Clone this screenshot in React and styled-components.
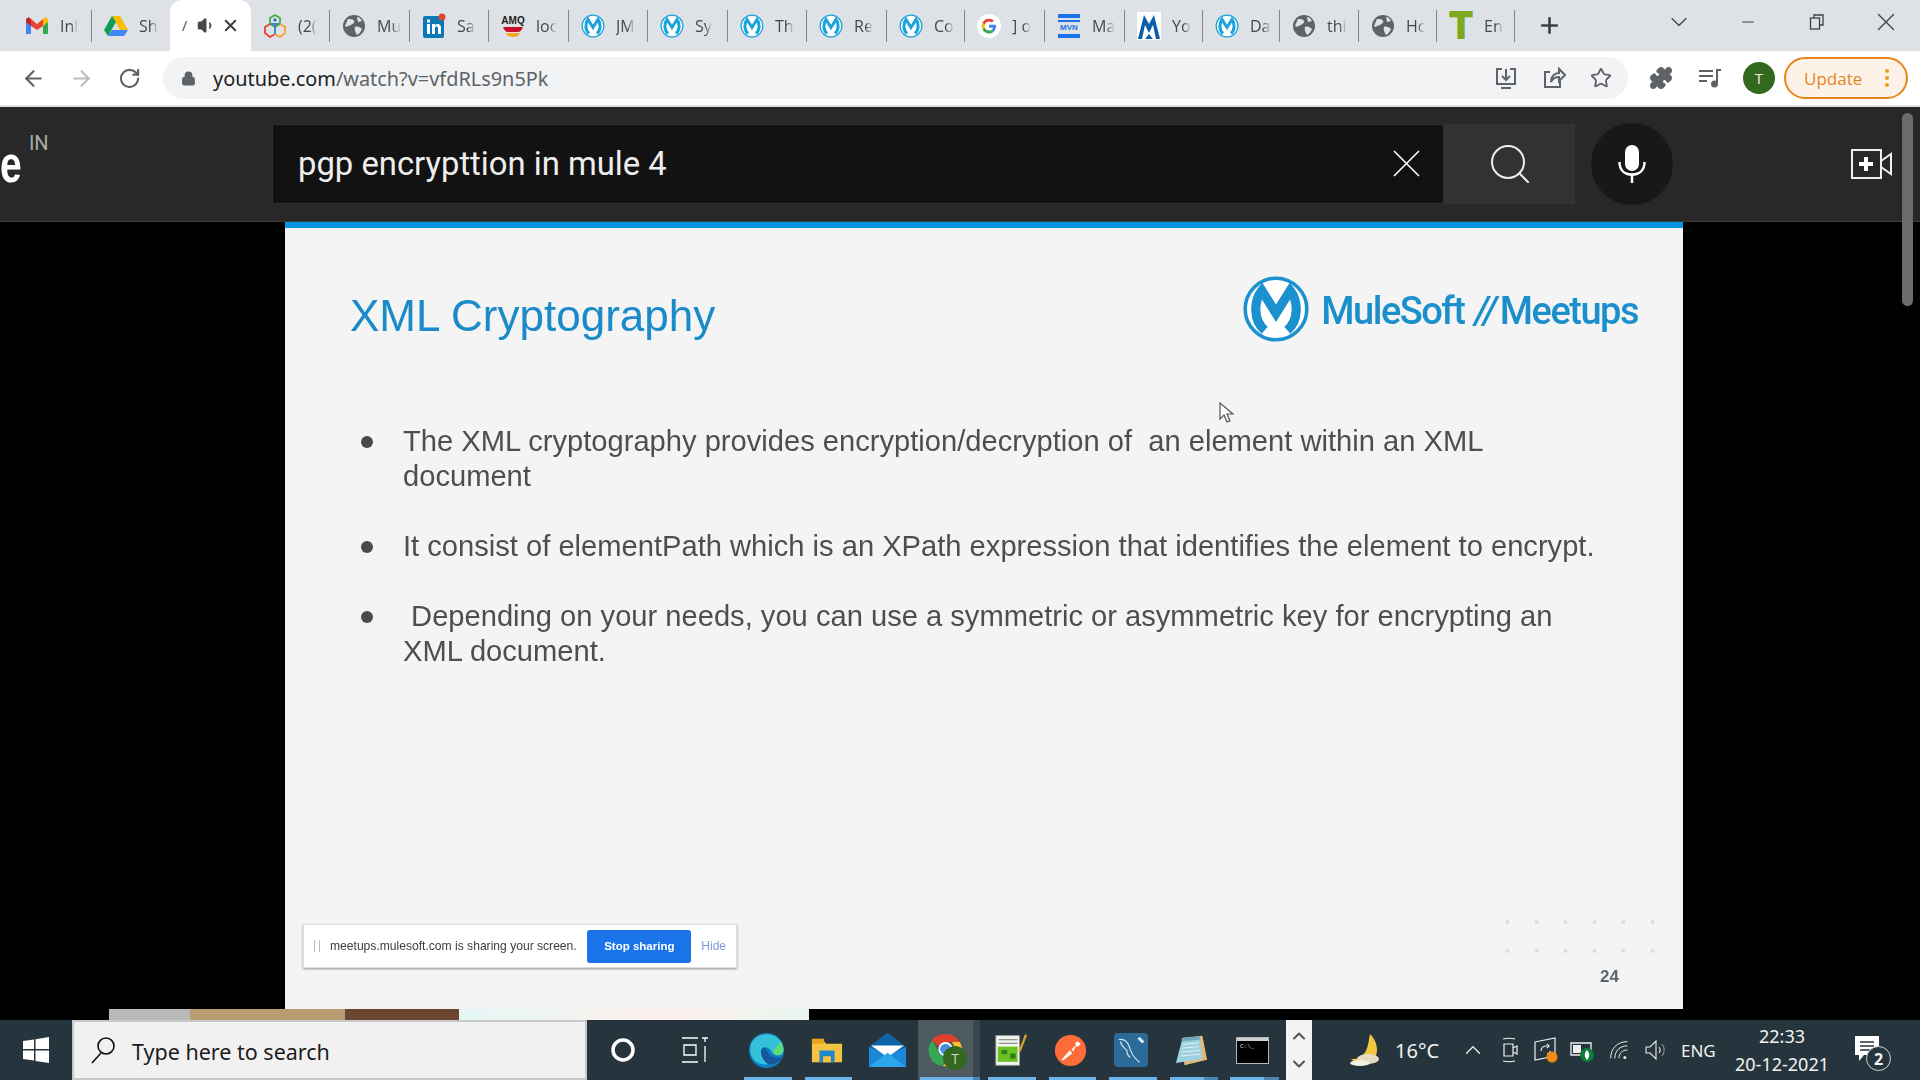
import styled, { createGlobalStyle } from "styled-components";
import { ArrowLeft, ArrowRight, RotateCw, Lock, Star, Puzzle, ChevronDown, Minus, X, Plus, Search, ChevronUp, Volume1 } from "lucide-react";

const GlobalStyle = createGlobalStyle`
  html, body {
    margin: 0;
    padding: 0;
    height: 100%;
    background: #000;
    overflow: hidden;
    font-family: "Open Sans", "Liberation Sans", sans-serif;
  }
  * {
    box-sizing: border-box;
  }
`;

const MuleMark = ({ size = 26, color = "#1aa3dc", ring = 3, weight = 6.5 }) => (
  <svg width={size} height={size} viewBox="0 0 48 48">
    <circle cx="24" cy="24" r={23 - ring / 2} fill="#fff" stroke={color} strokeWidth={ring} />
    <path
      d="M16 39 C8 32 8 19 14 11 L24 27 L34 11 C40 19 40 32 32 39"
      fill="none"
      stroke={color}
      strokeWidth={weight}
    />
  </svg>
);

const GmailIcon = () => (
  <svg width="24" height="20" viewBox="0 0 24 20">
    <path d="M1 4v14h5V8z" fill="#4285f4" />
    <path d="M23 4v14h-5V8z" fill="#34a853" />
    <path d="M18 3v7l5-4V4c0-2-2-3-4-2z" fill="#fbbc04" />
    <path d="M6 3v7l6 4 6-4V3l-6 5z" fill="#ea4335" />
    <path d="M6 3v7L1 6V4c0-2 2-3 4-2z" fill="#c5221f" />
  </svg>
);

const DriveIcon = () => (
  <svg width="24" height="22" viewBox="0 0 24 22">
    <path d="M8 1h8l8 14h-8z" fill="#fbbc04" />
    <path d="M8 1 0 15l4 6 8-14z" fill="#0f9d58" />
    <path d="M4 21h16l4-6H8z" fill="#4285f4" />
  </svg>
);

const RingsIcon = () => (
  <svg width="24" height="24" viewBox="0 0 24 24" fill="none" strokeWidth="1.8">
    <path d="M12 1l5 3v6l-5 3-5-3V4z" stroke="#3fae49" />
    <path d="M7 10 2 13v6l5 4 5-3" stroke="#e5443a" />
    <path d="M17 10l5 3v6l-5 4-5-3" stroke="#f4a62a" />
    <circle cx="12" cy="6" r="1.8" fill="#3b7fc4" stroke="none" />
    <path d="M8 10h8M12 10v10" stroke="#3b7fc4" />
  </svg>
);

const GlobeIcon = () => (
  <svg width="22" height="22" viewBox="0 0 22 22">
    <circle cx="11" cy="11" r="11" fill="#5f6368" />
    <path d="M5 4c3 0 5 0 6 2s-2 3-3 4-3 0-4 2l-2-1zM12 12c2-1 5 0 7 2-1 3-3 5-5 6-1-2-3-5-2-8zM14 2c2 0 4 2 5 4l-4 1z" fill="#dee1e6" />
  </svg>
);

const LinkedInIcon = () => (
  <svg width="24" height="26" viewBox="0 0 24 26">
    <rect x="1" y="3" width="21" height="22" rx="2" fill="#0a78b5" />
    <rect x="5" y="11" width="3" height="10" fill="#fff" />
    <rect x="5" y="6.5" width="3" height="3" fill="#fff" />
    <path d="M10 11h3v1.5c2-2.5 6-1.5 6 2V21h-3v-6c0-2-3-2-3 0v6h-3z" fill="#fff" />
    <circle cx="20" cy="4" r="3.5" fill="#e0453a" />
  </svg>
);

const AmqIcon = () => (
  <svg width="24" height="26" viewBox="0 0 24 26">
    <text x="12" y="11" textAnchor="middle" fontFamily="Liberation Sans, sans-serif" fontWeight="700" fontSize="10" fill="#222">
      AMQ
    </text>
    <path d="M2 14h20c-1 3-3 5-5 5H7c-2 0-4-2-5-5z" fill="#c8102e" />
    <path d="M5 20h14c-2 3-3 4-7 4s-5-1-7-4z" fill="#f2a81d" />
  </svg>
);

const GoogleIcon = () => (
  <svg width="24" height="24" viewBox="0 0 24 24">
    <circle cx="12" cy="12" r="12" fill="#fff" />
    <path d="M19 12.3c0-.6 0-1.1-.2-1.6H12v3h4a3.4 3.4 0 0 1-1.5 2.2l2.3 1.8c1.4-1.3 2.2-3.2 2.2-5.4z" fill="#4285f4" />
    <path d="M12 19.5c2 0 3.7-.7 4.8-1.8l-2.3-1.8c-.6.4-1.5.7-2.5.7-2 0-3.6-1.3-4.2-3.1L5.4 15.3A7.5 7.5 0 0 0 12 19.5z" fill="#34a853" />
    <path d="M7.8 13.5a4.5 4.5 0 0 1 0-3L5.4 8.7a7.5 7.5 0 0 0 0 6.6z" fill="#fbbc04" />
    <path d="M12 7.5c1.1 0 2.1.4 2.9 1.1l2.1-2.1A7.5 7.5 0 0 0 5.4 8.7l2.4 1.8C8.4 8.8 10 7.5 12 7.5z" fill="#ea4335" />
  </svg>
);

const MvnIcon = () => (
  <svg width="24" height="26" viewBox="0 0 24 26">
    <rect x="1" y="1" width="22" height="4" fill="#1a73e8" />
    <rect x="1" y="7" width="22" height="2" fill="#1a73e8" />
    <text x="12" y="17" textAnchor="middle" fontFamily="Liberation Sans, sans-serif" fontWeight="700" fontSize="8" fill="#1a73e8">
      MVN
    </text>
    <rect x="1" y="21" width="22" height="4" fill="#1a73e8" />
  </svg>
);

const PeaksIcon = () => (
  <svg width="24" height="28" viewBox="0 0 24 28">
    <rect width="24" height="28" fill="#fff" />
    <path d="M1 27 7 3l5 9 5-9 6 24h-4L16 13l-4 8-4-8-3 14z" fill="#0c5fa8" />
    <path d="M8 27l4-5 4 5z" fill="#0c5fa8" />
  </svg>
);

const TeeIcon = () => <TeeMark>T</TeeMark>;

const tabIcons = {
  gmail: <GmailIcon />,
  drive: <DriveIcon />,
  rings: <RingsIcon />,
  globe: <GlobeIcon />,
  linkedin: <LinkedInIcon />,
  amq: <AmqIcon />,
  mule: <MuleMark size={24} ring={2.5} weight={6} />,
  google: <GoogleIcon />,
  mvn: <MvnIcon />,
  peaks: <PeaksIcon />,
  tee: <TeeIcon />,
};

const leftTabs = [
  ["gmail", "Inl", 79],
  ["drive", "Sh", 79],
];

const rightTabs = [
  ["rings", "(2(", 79],
  ["globe", "Mu", 80],
  ["linkedin", "Sa", 79],
  ["amq", "loc", 80],
  ["mule", "JM", 79],
  ["mule", "Sy", 80],
  ["mule", "Th", 79],
  ["mule", "Re", 80],
  ["mule", "Co", 78],
  ["google", "] o", 80],
  ["mvn", "Ma", 80],
  ["peaks", "Yo", 78],
  ["mule", "Da", 77],
  ["globe", "thi", 79],
  ["globe", "Hc", 78],
  ["tee", "En", 78],
];

const TabRow = ({ items }) =>
  items.map(([icon, label, width], i) => (
    <Tab key={i} $width={width}>
      <TabIcon>{tabIcons[icon]}</TabIcon>
      <TabLabel>{label}</TabLabel>
    </Tab>
  ));

const bullets = [
  "The XML cryptography provides encryption/decryption of  an element within an XML document",
  "It consist of elementPath which is an XPath expression that identifies the element to encrypt.",
  " Depending on your needs, you can use a symmetric or asymmetric key for encrypting an XML document.",
];

const App = () => (
  <Page>
    <GlobalStyle />
    <TabStrip>
      <TabRow items={leftTabs} />
      <ActiveTab>
        <ActiveSliver>/</ActiveSliver>
        <Volume1 size={19} fill="#45484c" color="#45484c" />
        <X size={19} color="#3c4043" strokeWidth={2.5} />
      </ActiveTab>
      <TabRow items={rightTabs} />
      <NewTab>
        <Plus size={25} color="#3c4043" strokeWidth={2.5} />
      </NewTab>
      <WindowButtons>
        <WindowButton>
          <ChevronDown size={28} color="#3c4043" strokeWidth={1} />
        </WindowButton>
        <WindowButton>
          <Minus size={18} color="#3c4043" strokeWidth={1.5} />
        </WindowButton>
        <WindowButton>
          <svg width="18" height="18" viewBox="0 0 18 18" fill="none" stroke="#3c4043" strokeWidth="1.3">
            <rect x="2.5" y="5" width="9" height="11" />
            <path d="M6 5V2h9v10h-3.5" />
          </svg>
        </WindowButton>
        <WindowButton>
          <X size={30} color="#3c4043" strokeWidth={1} />
        </WindowButton>
      </WindowButtons>
    </TabStrip>

    <Toolbar>
      <NavButton>
        <ArrowLeft size={25} color="#5f6368" strokeWidth={2} />
      </NavButton>
      <NavButton>
        <ArrowRight size={25} color="#babcbe" strokeWidth={2} />
      </NavButton>
      <NavButton>
        <RotateCw size={23} color="#5f6368" strokeWidth={2.2} />
      </NavButton>
      <Omnibox>
        <Lock size={15} fill="#5f6368" color="#5f6368" strokeWidth={2.5} />
        <UrlText>
          youtube.com<UrlPath>/watch?v=vfdRLs9n5Pk</UrlPath>
        </UrlText>
        <OmniIcons>
          <svg width="24" height="24" viewBox="0 0 24 24" fill="none" stroke="#5f6368" strokeWidth="2">
            <path d="M8 3H3v15h18V3h-5M12 3v10M8 10l4 4 4-4M7 22h10" />
          </svg>
          <svg width="24" height="24" viewBox="0 0 24 24" fill="none" stroke="#5f6368" strokeWidth="2">
            <path d="M18 14v7H3V6h5M9 16c0-6 4-9 8-9V3l6 6-6 6v-4c-3 0-6 1-8 5z" />
          </svg>
          <Star size={22} color="#5f6368" strokeWidth={2} />
        </OmniIcons>
      </Omnibox>
      <ToolIcons>
        <Puzzle size={24} fill="#5f6368" color="#5f6368" />
        <svg width="24" height="24" viewBox="0 0 24 24" fill="none" stroke="#5f6368" strokeWidth="2">
          <path d="M1 5h14M1 10h14M1 15h8" />
          <path d="M19 18V4h4" />
          <circle cx="16.5" cy="18" r="2.5" fill="#5f6368" />
        </svg>
        <Avatar>T</Avatar>
      </ToolIcons>
      <UpdateButton>
        Update
        <UpdateDots />
      </UpdateButton>
    </Toolbar>
    <ToolbarEdge />

    <YtHeader>
      <LogoSlot>
        <LogoLetter>e</LogoLetter>
        <CountryCode>IN</CountryCode>
      </LogoSlot>
      <SearchField>
        <SearchText>pgp encrypttion in mule 4</SearchText>
        <svg width="27" height="27" viewBox="0 0 27 27" stroke="#fff" strokeWidth="1.6">
          <path d="M1 1l25 25M26 1 1 26" />
        </svg>
      </SearchField>
      <SearchButton>
        <Search size={48} color="#eee" strokeWidth={1} />
      </SearchButton>
      <MicButton>
        <svg width="28" height="38" viewBox="0 0 28 38" fill="none" stroke="#fff" strokeWidth="2.5">
          <rect x="7" y="0" width="14" height="26" rx="7" fill="#fff" stroke="none" />
          <path d="M1.5 17c0 8 5 12.5 12.5 12.5S26.5 25 26.5 17M14 29v9" />
        </svg>
      </MicButton>
      <CreateIcon>
        <svg width="42" height="30" viewBox="0 0 42 30" fill="none" stroke="#eee" strokeWidth="2">
          <path d="M1 1h29v28H1zM30 12l10-7v20l-10-7" />
          <path d="M15 8v14M8 15h14" strokeWidth="4" stroke="#fff" />
        </svg>
      </CreateIcon>
      <ScrollThumb />
    </YtHeader>

    <Stage>
      <Slide>
        <SlideHead>
          <SlideTitle>XML Cryptography</SlideTitle>
          <MuleLogo>
            <MuleMark size={68} color="#1b91cf" ring={2.5} weight={6.5} />
            <LogoWords>
              MuleSoft<LogoSlash>//</LogoSlash>Meetups
            </LogoWords>
          </MuleLogo>
        </SlideHead>
        <BulletList>
          {bullets.map((text, i) => (
            <BulletItem key={i}>
              <BulletDot />
              <BulletText>{text}</BulletText>
            </BulletItem>
          ))}
        </BulletList>
        <SlideFoot>
          <ShareBar>
            <ShareGrip />
            <ShareText>meetups.mulesoft.com is sharing your screen.</ShareText>
            <StopButton>Stop sharing</StopButton>
            <HideLink>Hide</HideLink>
          </ShareBar>
          <PageNumber>24</PageNumber>
        </SlideFoot>
        <DotGrid />
        <CursorMark>
          <svg width="16" height="22" viewBox="0 0 16 22">
            <path d="M1 1v16l4-4 3 7 3-1-3-7h6z" fill="#fff" stroke="#555" strokeWidth="1.2" />
          </svg>
        </CursorMark>
      </Slide>
      <ThumbStrip>
        <ThumbPhoto />
        <ThumbWhite />
      </ThumbStrip>
    </Stage>

    <Taskbar>
      <StartButton>
        <svg width="26" height="26" viewBox="0 0 26 26" fill="#fff">
          <path d="M0 4l11-1.6V12H0zM12.5 2.2 26 0v12H12.5zM0 13.5h11v10L0 22zM12.5 13.5H26V26l-13.5-2z" />
        </svg>
      </StartButton>
      <TaskSearch>
        <svg width="26" height="28" viewBox="0 0 26 28" fill="none" stroke="#111" strokeWidth="1.6">
          <circle cx="16" cy="10" r="8" />
          <path d="M11 17 2 27" />
        </svg>
        <TaskSearchText>Type here to search</TaskSearchText>
      </TaskSearch>
      <ShellSlot>
        <svg width="26" height="26" viewBox="0 0 26 26" fill="none" stroke="#fff" strokeWidth="3.5">
          <circle cx="13" cy="13" r="10" />
        </svg>
      </ShellSlot>
      <ShellSlot>
        <svg width="28" height="26" viewBox="0 0 28 26" fill="none" stroke="#fff" strokeWidth="1.3">
          <path d="M1 1h16M1 25h16M3 8h12v10H3zM24 1v4M24 9v16M21 1h6" />
        </svg>
      </ShellSlot>
      <AppSlots>
        <AppSlot $open>
          <svg width="37" height="37" viewBox="0 0 38 38">
            <circle cx="19" cy="19" r="18" fill="#0f7dc2" />
            <path d="M3 12C8 1 26-2 34 10c4 7 3 14-3 14-8 0-6-8-13-8-8 0-5 12 3 17-10 2-22-5-18-21z" fill="#35c1d9" />
            <path d="M18 16c-8 0-5 12 3 17 6 1 11-2 14-7-7 2-15-1-17-10z" fill="#16569c" />
            <path d="M34 10c4 7 3 14-3 14-4 0-5-2-6-4" fill="#5fd97a" />
          </svg>
        </AppSlot>
        <AppSlot $open>
          <svg width="32" height="27" viewBox="0 0 34 32" preserveAspectRatio="none">
            <path d="M1 4h12l3 4h17v22H1z" fill="#f5c342" />
            <path d="M1 2h13v6H1z" fill="#e8a317" />
            <path d="M9 16h16v14h-4v-7h-8v7H9z" fill="#1f86c9" />
            <rect x="13" y="23" width="8" height="7" fill="#f5c342" />
          </svg>
        </AppSlot>
        <AppSlot>
          <svg width="37" height="34" viewBox="0 0 36 38" preserveAspectRatio="none">
            <path d="M18 0 36 16v22H0V16z" fill="#1a87d8" />
            <path d="M18 0 36 16 18 24 0 16z" fill="#0b63a8" />
            <path d="M2 14h32L18 27z" fill="#fff" />
            <path d="M0 38 18 22l18 16z" fill="#2ca7ee" />
          </svg>
        </AppSlot>
        <AppSlot $selected $open $stacked>
          <svg width="35" height="34" viewBox="0 0 38 38">
            <path d="M19 1a18 18 0 0 1 16 9H19a9 9 0 0 0-8 5L4 8a18 18 0 0 1 15-7z" fill="#e2402f" />
            <path d="M4 8l8 14a9 9 0 0 0 8 5l-5 10A18 18 0 0 1 4 8z" fill="#34a853" />
            <path d="M35 10a18 18 0 0 1-19 27l8-13a9 9 0 0 0 2-14z" fill="#fbc02d" />
            <circle cx="19" cy="18" r="7" fill="#4a90e2" stroke="#fff" strokeWidth="2" />
          </svg>
          <SlotBadge>T</SlotBadge>
        </AppSlot>
        <AppSlot $open>
          <svg width="34" height="34" viewBox="0 0 36 40" preserveAspectRatio="none">
            <path d="M3 3h25v35H3z" fill="#f3f6ef" stroke="#999" />
            <path d="M6 8h20M6 12h20" stroke="#777" strokeWidth="1.2" />
            <path d="M5 16h21v18H5z" fill="#6cc223" />
            <path d="M9 20h6v5H9zM18 24h6v6h-6z" fill="#2e7d1e" />
            <path d="M28 22 35 2" stroke="#d6a02a" strokeWidth="2.5" />
          </svg>
        </AppSlot>
        <AppSlot $open>
          <svg width="33" height="33" viewBox="0 0 36 36">
            <circle cx="18" cy="18" r="17" fill="#ff6c37" />
            <path d="M8 28 17 18l3 3-10 8zM19 17l5-5-1-2 3-2 3 3-3 3-2-1-3 6z" fill="#fff" />
          </svg>
        </AppSlot>
        <AppSlot $open>
          <svg width="34" height="34" viewBox="0 0 36 36">
            <rect width="36" height="36" rx="4" fill="#2b6a99" />
            <path d="M5 7c5-1 9 2 11 7s2 8 6 12l5 5M7 9c0 5 4 6 7 10M14 19c-1 3 1 5 3 7" stroke="#d6e4ee" strokeWidth="1.2" fill="none" />
            <path d="M26 5l5 5" stroke="#e4eef4" strokeWidth="3" />
          </svg>
        </AppSlot>
        <AppSlot $open $stacked>
          <svg width="34" height="31" viewBox="0 0 36 40" preserveAspectRatio="none">
            <path d="M7 4 29 1l5 31-24 7z" fill="#e2b97c" />
            <path d="M8 4 26 2l3 29L1 36z" fill="#9fd2df" />
            <path d="M9 12 25 10M8 17 25 15M7 22 26 20M6 27 26 25" stroke="#e9f5f8" strokeWidth="1" />
            <path d="M8 4 26 2l.3 4L7.5 8z" fill="#6ea8bc" />
          </svg>
        </AppSlot>
        <AppSlot $open $stacked>
          <svg width="33" height="27" viewBox="0 0 33 27">
            <rect x=".5" y=".5" width="32" height="26" fill="#000" stroke="#b5b5b5" />
            <rect x="1" y="1" width="31" height="3" fill="#cfcfcf" />
            <text x="4" y="11" fontFamily="Liberation Mono, monospace" fontSize="6" fill="#ddd">
              C:\_
            </text>
          </svg>
        </AppSlot>
      </AppSlots>
      <SlotScroller>
        <ChevronUp size={20} color="#555" strokeWidth={2.5} />
        <ChevronDown size={20} color="#555" strokeWidth={2.5} />
      </SlotScroller>
      <Tray>
        <WeatherIcon>
          <svg width="36" height="36" viewBox="0 0 36 36">
            <path d="M22 2C20 12 20 18 14 24 10 27 6 27 3 27c8 8 26 6 26-9 0-7-3-12-7-16z" fill="#f3c63f" />
            <ellipse cx="20" cy="27" rx="11" ry="5" fill="#e8dcc0" />
            <ellipse cx="12" cy="31" rx="10" ry="3" fill="#f4f0e4" />
          </svg>
        </WeatherIcon>
        <Temperature>16°C</Temperature>
        <TraySlot>
          <ChevronUp size={26} color="#eee" strokeWidth={1.2} />
        </TraySlot>
        <TraySlot>
          <svg width="18" height="26" viewBox="0 0 18 26" fill="none" stroke="#eee" strokeWidth="1.2">
            <path d="M2 2c4-1 8-1 12 0M2 24c4 1 8 1 12 0M3 7h9v12H3zM12 11l4-2v8l-4-2" />
          </svg>
        </TraySlot>
        <TraySlot>
          <svg width="26" height="26" viewBox="0 0 26 26" fill="none" stroke="#eee" strokeWidth="1.2">
            <path d="M2 5 22 1v18L2 23zM8 14c0-3 2-5 6-5M14 7l2 2-2 2M14 17c2 0 3-1 3-3" />
            <circle cx="19" cy="20" r="5.5" fill="#f08a12" stroke="none" />
          </svg>
        </TraySlot>
        <TraySlot>
          <svg width="26" height="26" viewBox="0 0 26 26">
            <path d="M1 6h20v12H1z" fill="none" stroke="#eee" strokeWidth="1.3" />
            <rect x="3" y="8" width="8" height="8" fill="#eee" />
            <circle cx="17" cy="18" r="7" fill="#0a7c3a" />
            <path d="M17 13c3 3 3 7 0 10-3-3-3-7 0-10z" fill="#fff" />
          </svg>
        </TraySlot>
        <TraySlot>
          <svg width="20" height="20" viewBox="0 0 24 24" fill="none" stroke="#eee" strokeWidth="1.2">
            <path d="M2 22C2 10 10 2 22 2M7 22C7 13 13 7 22 7M12 22c0-6 4-10 10-10" />
            <circle cx="19" cy="21" r="1.8" fill="#eee" stroke="none" />
          </svg>
        </TraySlot>
        <TraySlot>
          <svg width="24" height="24" viewBox="0 0 24 24" fill="none" stroke="#eee" strokeWidth="1.1">
            <path d="M2 9h4l6-6v18l-6-6H2z" />
            <path d="M15 9c1.5 2 1.5 4 0 6" />
            <path d="M18 6c3 4 3 8 0 12" stroke="#8a949a" />
          </svg>
        </TraySlot>
        <LangLabel>ENG</LangLabel>
        <Clock>
          <span>22:33</span>
          <span>20-12-2021</span>
        </Clock>
        <Notifications>
          <svg width="26" height="30" viewBox="0 0 26 30">
            <path d="M1 1h24v19H10l-5 6v-6H1z" fill="#fff" />
            <path d="M6 7h14M6 11h14M6 15h10" stroke="#26353d" strokeWidth="1.3" />
          </svg>
          <NotifBadge>2</NotifBadge>
        </Notifications>
      </Tray>
    </Taskbar>
  </Page>
);

export default App;

const Page = styled.div`
  width: 1920px;
  height: 1080px;
  display: flex;
  flex-direction: column;
  overflow: hidden;
  background: #000;
`;

const TabStrip = styled.div`
  height: 51px;
  flex: none;
  display: flex;
  align-items: center;
  padding-left: 13px;
  background: #dee1e6;
`;

const Tab = styled.div`
  width: ${(p) => p.$width}px;
  height: 32px;
  flex: none;
  display: flex;
  align-items: center;
  gap: 3px;
  padding: 0 8px 0 12px;
  border-right: 1px solid #80868b;
`;

const TabIcon = styled.span`
  width: 24px;
  height: 28px;
  flex: none;
  display: flex;
  align-items: center;
  justify-content: center;
`;

const TeeMark = styled.span`
  font-family: "Liberation Sans", sans-serif;
  font-weight: 700;
  font-size: 36px;
  line-height: 28px;
  color: #7ba91f;
  -webkit-text-stroke: 2px #7ba91f;
`;

const TabLabel = styled.span`
  margin-left: 8px;
  white-space: nowrap;
  font-size: 16px;
  color: #45484c;
  mask-image: linear-gradient(90deg, #000 60%, transparent);
`;

const ActiveTab = styled.div`
  position: relative;
  width: 81px;
  height: 51px;
  flex: none;
  align-self: flex-end;
  display: flex;
  align-items: center;
  padding-left: 12px;
  background: #fff;
  border-radius: 12px 12px 0 0;
  margin-left: -1px;

  svg:last-child {
    margin-left: 5px;
  }
`;

const ActiveSliver = styled.span`
  width: 5px;
  margin-right: 10px;
  font-size: 14px;
  color: #45484c;
`;

const NewTab = styled.div`
  margin-left: 22px;
  display: flex;
`;

const WindowButtons = styled.div`
  margin-left: auto;
  padding-bottom: 8px;
  display: flex;
  align-items: center;
`;

const WindowButton = styled.div`
  width: 69px;
  display: flex;
  justify-content: center;
`;

const Toolbar = styled.div`
  height: 54px;
  flex: none;
  display: flex;
  align-items: center;
  padding-left: 9px;
  background: #fff;
`;

const NavButton = styled.div`
  width: 48px;
  display: flex;
  justify-content: center;
`;

const Omnibox = styled.div`
  width: 1465px;
  height: 42px;
  margin-left: 10px;
  display: flex;
  align-items: center;
  gap: 17px;
  padding: 0 16px 0 18px;
  border-radius: 21px;
  background: #f1f3f4;
`;

const UrlText = styled.span`
  font-family: "Noto Sans", sans-serif;
  font-size: 19.9px;
  color: #202124;
`;

const UrlPath = styled.span`
  color: #5f6368;
`;

const OmniIcons = styled.div`
  margin-left: auto;
  display: flex;
  align-items: center;
  gap: 24px;
`;

const ToolIcons = styled.div`
  margin-left: 21px;
  display: flex;
  align-items: center;
  gap: 25px;
`;

const Avatar = styled.div`
  width: 32px;
  height: 32px;
  margin-left: -4px;
  border-radius: 50%;
  background: #33691e;
  color: #e8f0e0;
  font-size: 15px;
  display: flex;
  align-items: center;
  justify-content: center;
`;

const UpdateButton = styled.div`
  width: 124px;
  height: 42px;
  margin-left: 9px;
  padding-left: 18px;
  border: 2px solid #e8851a;
  border-radius: 21px;
  background: #fdf2e7;
  color: #e8851a;
  font-size: 17px;
  display: flex;
  align-items: center;
  gap: 23px;
`;

const UpdateDots = styled.span`
  width: 4px;
  height: 4px;
  border-radius: 50%;
  background: #f09c17;
  box-shadow: 0 -7px 0 #f09c17, 0 7px 0 #f09c17;
`;

const ToolbarEdge = styled.div`
  height: 2px;
  flex: none;
  background: #e4e4e4;
`;

const YtHeader = styled.header`
  position: relative;
  height: 115px;
  flex: none;
  display: flex;
  align-items: center;
  padding-bottom: 1px;
  background: #282828;
  border-bottom: 1px solid #3c3c3c;
`;

const LogoSlot = styled.div`
  width: 272px;
  height: 100%;
  flex: none;
  display: flex;
  align-items: flex-start;
  overflow: hidden;
`;

const LogoLetter = styled.span`
  margin: 22px 0 0 0;
  font-family: "Liberation Sans", sans-serif;
  font-weight: 700;
  font-size: 52px;
  line-height: 70px;
  color: #fff;
  transform: scaleX(0.75);
  transform-origin: left;
`;

const CountryCode = styled.span`
  margin: 24px 0 0 0;
  font-family: "Roboto", sans-serif;
  font-size: 20px;
  color: #aaa;
`;

const SearchField = styled.div`
  width: 1172px;
  height: 80px;
  flex: none;
  display: flex;
  align-items: center;
  justify-content: space-between;
  padding: 0 23px 0 25px;
  background: #121212;
  border: 1px solid #303030;
  border-radius: 2px 0 0 2px;
`;

const SearchText = styled.span`
  font-family: "Roboto", sans-serif;
  font-size: 32.8px;
  color: #eee;
`;

const SearchButton = styled.div`
  width: 131px;
  height: 80px;
  flex: none;
  display: flex;
  align-items: center;
  justify-content: center;
  background: #323232;
`;

const MicButton = styled.div`
  width: 82px;
  height: 82px;
  flex: none;
  margin-left: 16px;
  border-radius: 50%;
  background: #181818;
  display: flex;
  align-items: center;
  justify-content: center;
`;

const CreateIcon = styled.div`
  margin-left: 178px;
  display: flex;
`;

const ScrollThumb = styled.div`
  position: absolute;
  top: 6px;
  right: 7px;
  width: 11px;
  height: 193px;
  z-index: 2;
  border-radius: 6px;
  background: #6b6b6b;
`;

const Stage = styled.main`
  flex: 1;
  min-height: 0;
  display: flex;
  flex-direction: column;
  background: #000;
`;

const Slide = styled.section`
  position: relative;
  width: 1398px;
  flex: 1;
  min-height: 0;
  margin-left: 285px;
  display: flex;
  flex-direction: column;
  border-top: 6px solid #0494e4;
  background: #f3f4f3;
  color: #4e4e4e;
  filter: blur(0.5px);
`;

const SlideHead = styled.div`
  display: flex;
  align-items: center;
  justify-content: space-between;
  padding: 47px 45px 0 65px;
`;

const SlideTitle = styled.h1`
  margin: 14px 0 0;
  font-family: "Liberation Sans", sans-serif;
  font-weight: 400;
  font-size: 44px;
  color: #1a8ac8;
`;

const MuleLogo = styled.div`
  display: flex;
  align-items: center;
  gap: 11px;
`;

const LogoWords = styled.span`
  margin-top: 3px;
  font-family: "Roboto", sans-serif;
  font-weight: 500;
  font-size: 38px;
  letter-spacing: -1.5px;
  color: #1b8fcb;
`;

const LogoSlash = styled.span`
  margin: 0 4px 0 10px;
  font-style: italic;
`;

const BulletList = styled.ul`
  list-style: none;
  margin: 81px 0 0;
  padding: 0 83px 0 76px;
  display: flex;
  flex-direction: column;
  gap: 35px;
`;

const BulletItem = styled.li`
  display: flex;
  align-items: flex-start;
  gap: 30px;
`;

const BulletDot = styled.span`
  width: 12px;
  height: 12px;
  flex: none;
  margin-top: 12px;
  border-radius: 50%;
  background: #4a4a4a;
`;

const BulletText = styled.span`
  font-family: "Liberation Sans", sans-serif;
  font-size: 29.13px;
  line-height: 35px;
  white-space: pre-wrap;
`;

const SlideFoot = styled.div`
  margin-top: auto;
  display: flex;
  align-items: flex-end;
  justify-content: space-between;
  padding: 0 64px 22px 18px;
`;

const ShareBar = styled.div`
  width: 434px;
  height: 44px;
  margin-bottom: 19px;
  display: flex;
  align-items: center;
  padding: 0 10px;
  background: #fff;
  border: 1px solid #ddd;
  box-shadow: 0 1px 2px rgba(0, 0, 0, 0.4);
`;

const ShareGrip = styled.span`
  width: 6px;
  height: 12px;
  flex: none;
  border-left: 1px solid #bbb;
  border-right: 1px solid #bbb;
`;

const ShareText = styled.span`
  margin-left: 10px;
  font-family: "Liberation Sans", sans-serif;
  font-size: 12.1px;
  white-space: nowrap;
  color: #3c3c3c;
`;

const StopButton = styled.span`
  width: 104px;
  height: 33px;
  flex: none;
  margin-left: auto;
  border-radius: 3px;
  background: #1a73e8;
  color: #fff;
  font-family: "Liberation Sans", sans-serif;
  font-weight: 700;
  font-size: 11.5px;
  display: flex;
  align-items: center;
  justify-content: center;
`;

const HideLink = styled.span`
  margin-left: 10px;
  font-family: "Liberation Sans", sans-serif;
  font-size: 12px;
  color: #7d9be0;
`;

const PageNumber = styled.span`
  font-family: "Liberation Sans", sans-serif;
  font-weight: 700;
  font-size: 17px;
  color: #56666e;
`;

const DotGrid = styled.span`
  position: absolute;
  left: 1208px;
  top: 680px;
  width: 174px;
  height: 58px;
  background-image: radial-gradient(circle, #dcdcdc 1.5px, transparent 2.5px);
  background-size: 29px 28.5px;
`;

const CursorMark = styled.span`
  position: absolute;
  left: 934px;
  top: 174px;
  display: flex;
`;

const ThumbStrip = styled.div`
  height: 11px;
  flex: none;
  width: 700px;
  margin-left: 109px;
  display: flex;
`;

const ThumbPhoto = styled.div`
  width: 350px;
  background: linear-gradient(90deg, #b9b9b9 0 81px, #b89d72 81px 236px, #6a4630 236px 350px);
`;

const ThumbWhite = styled.div`
  flex: 1;
  background: linear-gradient(90deg, #e3f7f5, #fff0ec 60%, #e7f5ef);
`;

const Taskbar = styled.footer`
  height: 60px;
  flex: none;
  display: flex;
  align-items: stretch;
  background: #26353d;
`;

const StartButton = styled.div`
  width: 72px;
  flex: none;
  display: flex;
  align-items: center;
  justify-content: center;
`;

const TaskSearch = styled.div`
  width: 515px;
  flex: none;
  display: flex;
  align-items: center;
  gap: 16px;
  padding-left: 16px;
  background: #f1f1f1;
  border: 2px solid #c8c8c8;
`;

const TaskSearchText = styled.span`
  margin-top: 2px;
  font-family: "Noto Sans", sans-serif;
  font-size: 21.5px;
  color: #1c1c1c;
`;

const ShellSlot = styled.div`
  width: 72px;
  flex: none;
  display: flex;
  align-items: center;
  justify-content: center;
`;

const AppSlots = styled.div`
  margin-left: 5px;
  display: flex;
`;

const AppSlot = styled.div`
  position: relative;
  width: ${(p) => (p.$selected ? 62.5 : 60.5)}px;
  display: flex;
  align-items: center;
  justify-content: center;
  padding-right: ${(p) => (p.$selected ? 7.5 : 0)}px;
  background: ${(p) =>
    p.$selected ? "linear-gradient(90deg, #4d5b61 0 55px, #39474e 55px)" : "transparent"};

  &::after {
    content: "";
    position: absolute;
    left: ${(p) => (p.$selected ? 2.5 : 8)}px;
    right: ${(p) => (p.$selected ? 0 : p.$stacked ? 4 : 5)}px;
    bottom: 0;
    height: 3px;
    background: ${(p) =>
      !p.$open
        ? "transparent"
        : p.$selected
          ? "linear-gradient(90deg, #6cb4ea 88%, #4f86ad 88%)"
          : p.$stacked
            ? "linear-gradient(90deg, #6cb4ea 70%, #4f86ad 70%)"
            : "#6cb4ea"};
  }
`;

const SlotBadge = styled.span`
  position: absolute;
  left: 25.5px;
  top: 26px;
  width: 24px;
  height: 24px;
  border-radius: 50%;
  background: #33691e;
  color: #ccd8c4;
  font-size: 14px;
  display: flex;
  align-items: center;
  justify-content: center;
`;

const SlotScroller = styled.div`
  width: 26px;
  flex: none;
  margin-left: 3.5px;
  display: flex;
  flex-direction: column;
  align-items: center;
  justify-content: space-between;
  padding: 6px 0;
  background: #f3f3f3;
`;

const Tray = styled.div`
  flex: 1;
  display: flex;
  align-items: center;
  color: #f2f2f2;
`;

const WeatherIcon = styled.div`
  width: 36px;
  margin-left: 36px;
  display: flex;
`;

const Temperature = styled.span`
  width: 60px;
  margin-left: 11px;
  font-family: "Noto Sans", sans-serif;
  font-size: 20px;
`;

const TraySlot = styled.div`
  width: 36.5px;
  display: flex;
  justify-content: center;
`;

const LangLabel = styled.span`
  margin-left: 7px;
  width: 34px;
  font-family: "Noto Sans", sans-serif;
  font-size: 17px;
`;

const Clock = styled.div`
  width: 112px;
  margin-left: 11px;
  display: flex;
  flex-direction: column;
  align-items: center;
  gap: 6px;
  font-family: "Noto Sans", sans-serif;
  font-size: 18px;
  line-height: 22px;
`;

const Notifications = styled.div`
  position: relative;
  margin-left: 16px;
  display: flex;
`;

const NotifBadge = styled.span`
  position: absolute;
  left: 12px;
  top: 11px;
  width: 25px;
  height: 25px;
  border-radius: 50%;
  border: 1.5px solid #cfd3d6;
  background: #26353d;
  font-family: "Noto Sans", sans-serif;
  font-weight: 700;
  font-size: 16px;
  display: flex;
  align-items: center;
  justify-content: center;
`;
